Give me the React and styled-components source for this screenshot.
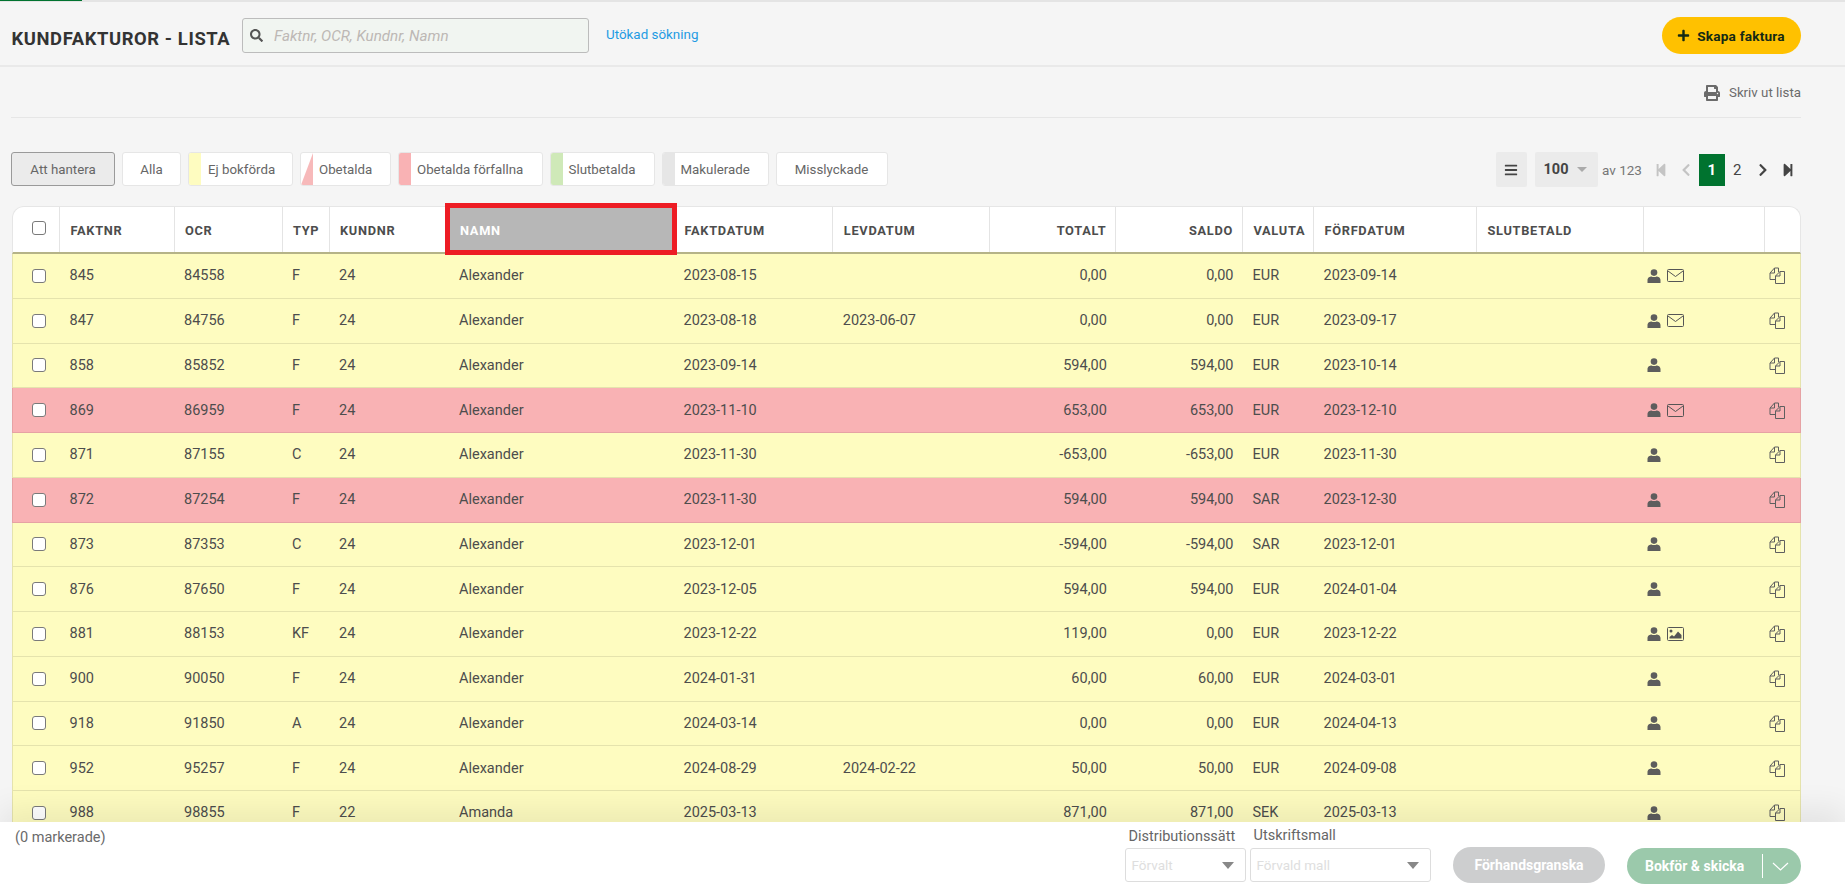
import React from "react";
import styled, { createGlobalStyle } from "styled-components";
import { FaSearch, FaPrint, FaPlus, FaBars, FaStepBackward, FaStepForward, FaChevronLeft, FaChevronRight } from "react-icons/fa";

const Global = createGlobalStyle`
  html, body { margin: 0; padding: 0; height: 100%; overflow: hidden; }
  body { font-family: Roboto, "Liberation Sans", sans-serif; background: #f5f5f5; color: #4d4d4d; }
  * { box-sizing: border-box; }
`;

const Page = styled.div`
  height: 100vh;
  display: flex;
  flex-direction: column;
  overflow: hidden;
  background: #f5f5f5;
`;
const Progress = styled.div`
  height: 2px;
  flex: none;
  background: #e4e4e4;
`;
const ProgressFill = styled.div`
  width: 82px;
  height: 1px;
  background: #00732f;
`;
const Header = styled.header`
  flex: none;
  height: 65px;
  display: flex;
  align-items: center;
  padding: 0 44.5px 0 11.5px;
  border-bottom: 2px solid #e9e9e9;
`;
const Title = styled.h1`
  margin: 10px 11.5px 0 0;
  width: 219px;
  font: 700 18.4px Roboto, sans-serif;
  letter-spacing: 0.6px;
  color: #333;
  white-space: nowrap;
`;
const SearchBox = styled.label`
  width: 347px;
  height: 35px;
  margin-top: 4px;
  display: flex;
  align-items: center;
  gap: 11px;
  padding: 0 7px;
  background: #f1f5f1;
  border: 1px solid #bcbcbc;
  border-radius: 3px;
  color: #555;
  font-size: 13px;
`;
const SearchInput = styled.input`
  flex: 1;
  min-width: 0;
  border: 0;
  padding: 0;
  background: transparent;
  font: italic 400 15.2px Roboto, sans-serif;
  &::placeholder { color: #bdb8b5; opacity: 1; }
`;
const AdvancedLink = styled.a`
  margin-left: 17px;
  margin-top: 1px;
  font-size: 13.4px;
  color: #1f9be3;
`;
const CreateButton = styled.button`
  margin-left: auto;
  margin-top: 4px;
  width: 139px;
  height: 37px;
  display: flex;
  align-items: center;
  justify-content: center;
  gap: 7px;
  border: 0;
  border-radius: 19px;
  background: #ffc100;
  color: #152a14;
  font: 700 13.6px Roboto, sans-serif;
  letter-spacing: 0.2px;
`;
const Content = styled.main`
  flex: 1;
  min-height: 0;
  overflow: hidden;
  padding: 0 44px 0 11px;
`;
const PrintRow = styled.div`
  height: 51px;
  display: flex;
  align-items: center;
  justify-content: flex-end;
  gap: 9px;
  border-bottom: 1px solid #e6e6e6;
  color: #6b6b6b;
  font-size: 13.3px;
  padding-top: 1px;
`;
const FilterRow = styled.div`
  margin-top: 34px;
  height: 35px;
  display: flex;
  align-items: flex-start;
  justify-content: space-between;
`;
const Filters = styled.div`
  display: flex;
  gap: 7px;
`;
const FilterTab = styled.button`
  width: ${(p) => p.$w}px;
  height: 34px;
  padding: 0;
  display: flex;
  align-items: center;
  justify-content: center;
  position: relative;
  overflow: hidden;
  background: ${(p) => (p.$active ? "#ebebeb" : "#fff")};
  border: 1px solid ${(p) => (p.$active ? "#9a9a9a" : "#e6e6e6")};
  border-radius: 3px;
  color: #666;
  font: 400 13.3px Roboto, sans-serif;
`;
const FilterSwatchTab = styled(FilterTab)`
  justify-content: flex-start;
`;
const Swatch = styled.span`
  flex: none;
  width: 12px;
  align-self: stretch;
  margin-right: ${(p) => p.$gap}px;
  background: ${(p) => p.$bg};
  ${(p) => p.$triangle && "clip-path: polygon(0 100%, 100% 0, 100% 100%);"}
`;
const Pager = styled.div`
  display: flex;
  align-items: center;
`;
const MenuButton = styled.button`
  width: 31px;
  height: 35px;
  padding: 0;
  margin-right: 8px;
  border: 0;
  border-radius: 2px;
  background: #ebebeb;
  color: #444;
  font-size: 14px;
  display: flex;
  align-items: center;
  justify-content: center;
`;
const PageSize = styled.div`
  width: 63px;
  height: 35px;
  padding-left: 9px;
  display: flex;
  align-items: center;
  gap: 9px;
  border-radius: 2px;
  background: #ebebeb;
  color: #444;
  font-size: 14.5px;
  font-weight: 700;
`;
const Caret = styled.span`
  width: 0;
  height: 0;
  border-left: ${(p) => p.$size || 5.5}px solid transparent;
  border-right: ${(p) => p.$size || 5.5}px solid transparent;
  border-top: ${(p) => (p.$size ? p.$size + 1 : 5)}px solid ${(p) => p.$color || "#aaa"};
`;
const PageCount = styled.span`
  width: 50.5px;
  padding-left: 4.5px;
  font-size: 13.5px;
  color: #777;
`;
const PageItem = styled.span`
  width: 25.5px;
  height: 32px;
  display: flex;
  align-items: center;
  justify-content: center;
  font-size: ${(p) => (p.$icon ? "14px" : "15px")};
  font-weight: ${(p) => (p.$active ? 700 : 400)};
  background: ${(p) => (p.$active ? "#00732f" : "transparent")};
  color: ${(p) => (p.$active ? "#fff" : p.$dim ? "#c4c4c4" : "#444")};
`;
const Table = styled.section`
  margin: 19px 0 0 1px;
`;
const columns = "47px 114.5px 108px 47px 120px 224.5px 159.3px 157px 126px 126.7px 71px 163px 166.7px 121px 35.3px";
const HeadRow = styled.div`
  height: 48px;
  display: grid;
  grid-template-columns: ${columns};
  background: #fff;
  border: 1px solid #e6e6e6;
  border-bottom: 2px solid #b5b388;
  border-radius: 12px 12px 0 0;
`;
const HeadCell = styled.div`
  position: relative;
  display: flex;
  align-items: center;
  justify-content: ${(p) => (p.$right ? "flex-end" : "flex-start")};
  padding: 2px 9px 0 10.5px;
  border-right: ${(p) => (p.$plain ? "0" : "1px solid #e4e4e4")};
  background: ${(p) => (p.$marked ? "#b7b7b7" : "transparent")};
  color: ${(p) => (p.$marked ? "#fff" : "#4d4d4d")};
  font-size: 12.8px;
  font-weight: 700;
  letter-spacing: 0.7px;
  ${(p) =>
    p.$marked &&
    `&::after {
      content: "";
      position: absolute;
      inset: -4px -2.7px -3px -5px;
      border: 5px solid #ed1c24;
    }`}
`;
const HeadCheckCell = styled(HeadCell)`
  padding: 0 0 4px 19px;
`;
const tones = {
  yellow: { bg: "#fefcc0", line: "#e5e3ad" },
  red: { bg: "#f9b2b4", line: "#e6a2a4" },
};
const Row = styled.div`
  height: 44.75px;
  display: grid;
  grid-template-columns: ${columns};
  align-items: center;
  background: ${(p) => tones[p.$tone].bg};
  border-left: 1px solid ${(p) => tones[p.$tone].line};
  border-right: 1px solid ${(p) => tones[p.$tone].line};
  border-bottom: 1px solid ${(p) => tones[p.$tone].line};
`;
const Cell = styled.div`
  padding: 0 9.5px;
  text-align: ${(p) => (p.$right ? "right" : "left")};
  font-size: 14.5px;
  color: #4d4d4d;
  white-space: nowrap;
`;
const CheckCell = styled.div`
  padding-left: 19px;
  display: flex;
`;
const Check = styled.input.attrs({ type: "checkbox" })`
  appearance: none;
  width: 14px;
  height: 14px;
  margin: 0;
  background: #fff;
  border: 1.5px solid #7a7a7a;
  border-radius: 3px;
`;
const IconCell = styled.div`
  padding-left: 3.5px;
  display: flex;
  align-items: center;
  gap: 6px;
`;
const CopyCell = styled.div`
  padding-left: 4.5px;
  display: flex;
`;
const Bar = styled.footer`
  flex: none;
  position: relative;
  z-index: 2;
  height: 67px;
  display: flex;
  align-items: flex-start;
  padding: 0 44px 0 15px;
  background: #fff;
  box-shadow: 0 -14px 30px rgba(0, 0, 0, 0.07);
`;
const Marked = styled.span`
  margin-top: 7px;
  margin-right: auto;
  font-size: 14.5px;
  color: #6a6a6a;
`;
const Field = styled.div`
  width: ${(p) => p.$w}px;
  margin-right: ${(p) => p.$gap}px;
  display: flex;
  flex-direction: column;
`;
const FieldLabel = styled.span`
  height: 26px;
  padding: ${(p) => p.$top}px 0 0 4px;
  font-size: 14.5px;
  line-height: 17px;
  color: #666;
  white-space: nowrap;
`;
const FieldSelect = styled.div`
  height: 34px;
  display: flex;
  align-items: center;
  justify-content: space-between;
  padding: 0 11px 0 6px;
  border: 1px solid #ddd;
  border-radius: 3px;
  font-size: 13.5px;
  color: #dedede;
`;
const SolidButton = styled.button`
  width: ${(p) => p.$w}px;
  height: 36px;
  margin-top: ${(p) => p.$top}px;
  margin-right: ${(p) => p.$gap}px;
  display: flex;
  align-items: center;
  justify-content: center;
  border: 0;
  border-radius: 18px;
  background: ${(p) => p.$bg};
  color: #fff;
  font: 700 14px Roboto, sans-serif;
  padding: 0;
`;
const SendButton = styled(SolidButton)`
  justify-content: flex-start;
  padding-left: 18px;
`;
const SendDivider = styled.span`
  width: 1px;
  height: 24px;
  margin-left: 18px;
  margin-right: 9px;
  background: #fff;
`;

const PersonIcon = () => (
  <svg width="14" height="14" viewBox="0 0 14 14" fill="#5d5d5d">
    <circle cx="7" cy="3.6" r="3.3" />
    <path d="M.5 14v-3c0-2.500 2.500-3.500 4-3.500 1 .8 4 .8 5 0 1.500 0 4 1 4 3.500v3z" />
  </svg>
);
const MailIcon = () => (
  <svg width="17" height="13" viewBox="0 0 17 13" fill="none" stroke="#555" strokeWidth="1">
    <rect x=".5" y=".5" width="16" height="12" rx="1" />
    <path d="M1 2l7.500 5.500L16 2" />
  </svg>
);
const ImageIcon = () => (
  <svg width="17" height="14" viewBox="0 0 17 14">
    <rect x=".5" y=".5" width="16" height="13" rx="1" fill="none" stroke="#555" />
    <circle cx="4" cy="4" r="1.500" fill="#555" />
    <path d="M2.500 11.500V10l2.500-2 2 1.500L11 4.500l3.500 3.500v3.500z" fill="#555" />
  </svg>
);
const CopyIcon = () => (
  <svg width="17" height="17" viewBox="0 0 17 17" fill="none" stroke="#5f5f5f" strokeWidth="1">
    <path d="M6 12.500H1V6l4.500-5h4v4" />
    <path d="M5.500 1v5H1" />
    <path d="M6.500 9l4.500-4.500h4.500v12h-9z" />
    <path d="M11 4.500V9H6.500" />
  </svg>
);
const Chevron = () => (
  <svg width="17" height="9" viewBox="0 0 17 9" fill="none" stroke="#fff" strokeWidth="1.2">
    <path d="M1 1l7.500 7L16 1" />
  </svg>
);

const filters = [
  { label: "Ej bokförda", w: 105, bg: "#fefcc0", gap: 7 },
  { label: "Obetalda", w: 91, bg: "radial-gradient(#f7b9ba 55%, #fcdcdc 62%) 0 0/2px 2px", gap: 6, triangle: true },
  { label: "Obetalda förfallna", w: 144.5, bg: "#f9b2b4", gap: 6 },
  { label: "Slutbetalda", w: 105, bg: "radial-gradient(#cfe9b8 60%, #e0f1d0 61%) 0 0/2px 2px", gap: 6 },
  { label: "Makulerade", w: 107, bg: "#e6e6e6", gap: 6 },
];

const heads = [
  ["FAKTNR"], ["OCR"], ["TYP"], ["KUNDNR", false, true], ["NAMN", false, true, true],
  ["FAKTDATUM"], ["LEVDATUM"], ["TOTALT", true], ["SALDO", true], ["VALUTA"], ["FÖRFDATUM"], ["SLUTBETALD"], [""], [""],
];

const A = "Alexander";
const rows = [
  ["845", "84558", "F", "24", A, "2023-08-15", "", "0,00", "0,00", "EUR", "2023-09-14", "mail", "yellow"],
  ["847", "84756", "F", "24", A, "2023-08-18", "2023-06-07", "0,00", "0,00", "EUR", "2023-09-17", "mail", "yellow"],
  ["858", "85852", "F", "24", A, "2023-09-14", "", "594,00", "594,00", "EUR", "2023-10-14", "", "yellow"],
  ["869", "86959", "F", "24", A, "2023-11-10", "", "653,00", "653,00", "EUR", "2023-12-10", "mail", "red"],
  ["871", "87155", "C", "24", A, "2023-11-30", "", "-653,00", "-653,00", "EUR", "2023-11-30", "", "yellow"],
  ["872", "87254", "F", "24", A, "2023-11-30", "", "594,00", "594,00", "SAR", "2023-12-30", "", "red"],
  ["873", "87353", "C", "24", A, "2023-12-01", "", "-594,00", "-594,00", "SAR", "2023-12-01", "", "yellow"],
  ["876", "87650", "F", "24", A, "2023-12-05", "", "594,00", "594,00", "EUR", "2024-01-04", "", "yellow"],
  ["881", "88153", "KF", "24", A, "2023-12-22", "", "119,00", "0,00", "EUR", "2023-12-22", "image", "yellow"],
  ["900", "90050", "F", "24", A, "2024-01-31", "", "60,00", "60,00", "EUR", "2024-03-01", "", "yellow"],
  ["918", "91850", "A", "24", A, "2024-03-14", "", "0,00", "0,00", "EUR", "2024-04-13", "", "yellow"],
  ["952", "95257", "F", "24", A, "2024-08-29", "2024-02-22", "50,00", "50,00", "EUR", "2024-09-08", "", "yellow"],
  ["988", "98855", "F", "22", "Amanda", "2025-03-13", "", "871,00", "871,00", "SEK", "2025-03-13", "", "yellow"],
];

export default function App() {
  return (
    <Page>
      <Global />
      <Progress><ProgressFill /></Progress>
      <Header>
        <Title>KUNDFAKTUROR - LISTA</Title>
        <SearchBox>
          <FaSearch />
          <SearchInput placeholder="Faktnr, OCR, Kundnr, Namn" readOnly />
        </SearchBox>
        <AdvancedLink>Utökad sökning</AdvancedLink>
        <CreateButton><FaPlus size={13} />Skapa faktura</CreateButton>
      </Header>
      <Content>
        <PrintRow><FaPrint size={16} />Skriv ut lista</PrintRow>
        <FilterRow>
          <Filters>
            <FilterTab $w={104} $active>Att hantera</FilterTab>
            <FilterTab $w={59}>Alla</FilterTab>
            {filters.map((f) => (
              <FilterSwatchTab key={f.label} $w={f.w}>
                <Swatch $bg={f.bg} $gap={f.gap} $triangle={f.triangle} />
                {f.label}
              </FilterSwatchTab>
            ))}
            <FilterTab $w={112}>Misslyckade</FilterTab>
          </Filters>
          <Pager>
            <MenuButton><FaBars /></MenuButton>
            <PageSize>100<Caret /></PageSize>
            <PageCount>av 123</PageCount>
            <PageItem $icon $dim><FaStepBackward /></PageItem>
            <PageItem $icon $dim><FaChevronLeft /></PageItem>
            <PageItem $active>1</PageItem>
            <PageItem>2</PageItem>
            <PageItem $icon><FaChevronRight /></PageItem>
            <PageItem $icon><FaStepForward /></PageItem>
          </Pager>
        </FilterRow>
        <Table>
          <HeadRow>
            <HeadCheckCell><Check /></HeadCheckCell>
            {heads.map(([label, right, plain, marked], i) => (
              <HeadCell key={i} $right={right} $plain={plain || i === heads.length - 1} $marked={marked}>{label}</HeadCell>
            ))}
          </HeadRow>
          {rows.map((r) => (
            <Row key={r[0]} $tone={r[12]}>
              <CheckCell><Check /></CheckCell>
              <Cell>{r[0]}</Cell>
              <Cell>{r[1]}</Cell>
              <Cell>{r[2]}</Cell>
              <Cell>{r[3]}</Cell>
              <Cell>{r[4]}</Cell>
              <Cell>{r[5]}</Cell>
              <Cell>{r[6]}</Cell>
              <Cell $right>{r[7]}</Cell>
              <Cell $right>{r[8]}</Cell>
              <Cell>{r[9]}</Cell>
              <Cell>{r[10]}</Cell>
              <Cell />
              <IconCell>
                <PersonIcon />
                {r[11] === "mail" && <MailIcon />}
                {r[11] === "image" && <ImageIcon />}
              </IconCell>
              <CopyCell><CopyIcon /></CopyCell>
            </Row>
          ))}
        </Table>
      </Content>
      <Bar>
        <Marked>(0 markerade)</Marked>
        <Field $w={121} $gap={4}>
          <FieldLabel $top={6}>Distributionssätt</FieldLabel>
          <FieldSelect>Förvalt<Caret $color="#888" $size={6} /></FieldSelect>
        </Field>
        <Field $w={181.5} $gap={22}>
          <FieldLabel $top={5}>Utskriftsmall</FieldLabel>
          <FieldSelect>Förvald mall<Caret $color="#888" $size={6} /></FieldSelect>
        </Field>
        <SolidButton $w={152} $top={25} $gap={22} $bg="#cdcecf">Förhandsgranska</SolidButton>
        <SendButton $w={174} $top={26} $gap={0} $bg="#9bc9ab">
          Bokför &amp; skicka
          <SendDivider />
          <Chevron />
        </SendButton>
      </Bar>
    </Page>
  );
}
